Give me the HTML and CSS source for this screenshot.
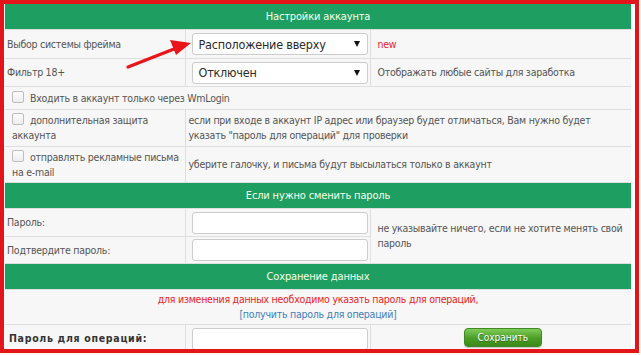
FILE: index.html
```html
<!DOCTYPE html>
<html lang="ru">
<head>
<meta charset="utf-8">
<title>Настройки аккаунта</title>
<link rel="stylesheet" href="styles.css">
</head>
<body>
<div class="frame">
  <table class="settings">
    <colgroup><col class="c1"><col class="c2"><col class="c3"></colgroup>
    <tr class="head"><th colspan="3">Настройки аккаунта</th></tr>
    <tr class="row h29">
      <td class="lbl">Выбор системы фрейма</td>
      <td class="ctl"><div class="select"><span>Расположение вверху</span><span class="caret"></span></div></td>
      <td class="note red">new</td>
    </tr>
    <tr class="row h28">
      <td class="lbl">Фильтр 18+</td>
      <td class="ctl"><div class="select"><span>Отключен</span><span class="caret"></span></div></td>
      <td class="note">Отображать любые сайты для заработка</td>
    </tr>
    <tr class="row h23">
      <td class="lbl chk" colspan="3"><span class="box"></span>Входить в аккаунт только через WmLogin</td>
    </tr>
    <tr class="row h37">
      <td class="lbl chk"><span class="box"></span>дополнительная защита аккаунта</td>
      <td class="desc" colspan="2">если при входе в аккаунт IP адрес или браузер будет отличаться, Вам нужно будет указать "пароль для операций" для проверки</td>
    </tr>
    <tr class="row h36">
      <td class="lbl chk"><span class="box"></span>отправлять рекламные письма на e-mail</td>
      <td class="desc" colspan="2">уберите галочку, и письма будут высылаться только в аккаунт</td>
    </tr>
    <tr class="head"><th colspan="3">Если нужно сменить пароль</th></tr>
    <tr class="row h28">
      <td class="lbl">Пароль:</td>
      <td class="ctl"><div class="input"></div></td>
      <td class="note" rowspan="2">не указывайте ничего, если не хотите менять свой пароль</td>
    </tr>
    <tr class="row h27">
      <td class="lbl">Подтвердите пароль:</td>
      <td class="ctl"><div class="input"></div></td>
    </tr>
    <tr class="head"><th colspan="3">Сохранение данных</th></tr>
    <tr class="row h35">
      <td class="msg" colspan="3"><span class="red">для изменения данных необходимо указать пароль для операций,</span><br><span class="blue">[получить пароль для операций]</span></td>
    </tr>
    <tr class="row h30">
      <td class="lbl strong">Пароль для операций:</td>
      <td class="ctl top"><div class="input"></div></td>
      <td class="btncell top"><span class="btn">Сохранить</span></td>
    </tr>
  </table>
  <svg class="arrow" width="200" height="80" viewBox="0 0 200 80">
    <line x1="128" y1="67" x2="174" y2="49" stroke="#e8161b" stroke-width="3.2" stroke-linecap="round"/>
    <polygon points="191,43 170,40 176,55" fill="#e8161b"/>
  </svg>
</div>
</body>
</html>
```
FILE: styles.css
```css
html, body {
  margin: 0;
  padding: 0;
  background: #fffbe6;
}
.frame {
  position: relative;
  width: 630px;
  height: 345px;
  border: 4px solid #e3151a;
  background: #ffffff;
  padding: 0 0 0 1px;
  overflow: hidden;
  box-sizing: content-box;
}
.settings {
  width: 626px;
  border-collapse: collapse;
  table-layout: fixed;
  font-family: "DejaVu Sans Condensed", "DejaVu Sans", sans-serif;
  font-size: 10.5px;
  letter-spacing: -0.25px;
  color: #555555;
  margin-top: 0;
}
.c1 { width: 180px; }
.c2 { width: 185px; }
.c3 { width: 261px; }
.head th {
  background: #1f9e62;
  color: #f4ffe6;
  font-weight: normal;
  font-size: 11px;
  letter-spacing: -0.15px;
  height: 25px;
  padding: 0;
  text-align: center;
}
.row td {
  background: #f7f7f7;
  border: 1px solid #dedede;
  border-left-color: #e4e4e4;
  padding: 0;
  vertical-align: middle;
  line-height: 15px;
}
.row td:first-child { border-left: none; }
.row td:last-child { border-right: none; }
.h29 { height: 29px; }
.h28 { height: 28px; }
.h27 { height: 27px; }
.h23 { height: 23px; }
.h37 { height: 37px; }
.h36 { height: 36px; }
.h35 { height: 35px; }
.h30 { height: 30px; }
.lbl { padding-left: 2px !important; }
.chk { padding-left: 7px !important; }
.box {
  display: inline-block;
  width: 10px;
  height: 10px;
  border: 1px solid #bdbdbd;
  border-radius: 2px;
  background: linear-gradient(#fdfdfd, #ededed);
  vertical-align: -1px;
  margin-right: 6px;
}
.ctl { padding-left: 6px !important; }
.ctl.top, .btncell.top { vertical-align: top !important; padding-top: 3px !important; }
.note { padding-left: 7px !important; }
.desc { padding-left: 3px !important; padding-right: 16px !important; }
.red { color: #ec2227; }
.blue { color: #3d7fbf; }
.select, .input {
  box-sizing: border-box;
  width: 176px;
  height: 22px;
  border: 1px solid #cccccc;
  border-radius: 3px;
  background: #ffffff;
}
.select {
  display: flex;
  align-items: center;
  justify-content: space-between;
  padding: 0 7px 0 6px;
  font-family: "DejaVu Sans Condensed", "DejaVu Sans", sans-serif;
  font-size: 12.5px;
  letter-spacing: -0.2px;
  white-space: nowrap;
  color: #2a2a2a;
}
.caret {
  flex: none;
  width: 0;
  height: 0;
  border-left: 3px solid transparent;
  border-right: 3px solid transparent;
  border-top: 6px solid #111111;
}
.msg { text-align: center; }
.strong {
  font-weight: bold;
  letter-spacing: 0.7px;
  color: #333333;
  vertical-align: top !important;
  padding-top: 6px !important;
  padding-left: 4px !important;
}
.btncell { text-align: center; }
.btn {
  display: inline-block;
  width: 76px;
  height: 17px;
  line-height: 17px;
  margin-left: 4px;
  border-radius: 4px;
  border: 1px solid #3f8a22;
  background: linear-gradient(#7fcc58, #4a9e26 55%, #3a8a1a);
  color: #ffffff;
  font-size: 10px;
  letter-spacing: 0;
  text-shadow: 0 1px 0 #2e6a14;
  box-shadow: 0 1px 1px rgba(0,0,0,0.2);
}
.arrow {
  position: absolute;
  left: -4px;
  top: -4px;
  pointer-events: none;
}
```
